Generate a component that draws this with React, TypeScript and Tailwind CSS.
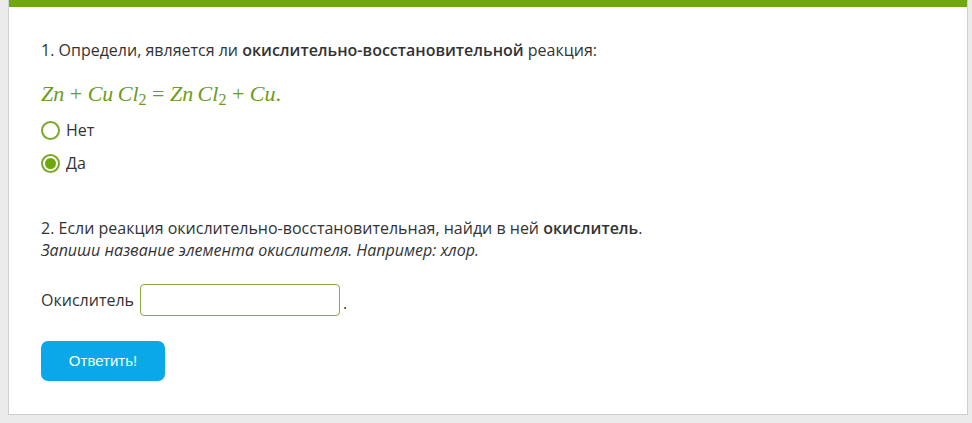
import { useState } from "react"

export default function App() {
  const [answer, setAnswer] = useState<"no" | "yes">("yes")
  const [value, setValue] = useState("")

  return (
    <div className="min-h-[423px] bg-[#ebebeb] pl-2 pr-[4px] pb-[8px] font-['Open_Sans',sans-serif] text-[16px] text-[#333]">
      <div className="w-[960px] border-x border-b border-[#cfcfcf] bg-white">
        <div className="h-[7px] bg-[#6fa80b]" />
        <div className="px-8 pt-[32px] pb-[33px]">
          <p className="leading-[22px]">
            1. Определи, является ли <b className="font-semibold">окислительно-восстановительной</b> реакция:
          </p>
          <p className="mt-[16px] h-[34px] font-['Liberation_Serif',serif] text-[22px] italic leading-[34px] text-[#6b9b22]">
            Zn <span className="not-italic">+</span> Cu&thinsp;Cl<sub className="not-italic text-[16px]">2</sub>{" "}
            <span className="not-italic">=</span> Zn&thinsp;Cl<sub className="not-italic text-[16px]">2</sub>{" "}
            <span className="not-italic">+</span> Cu<span className="not-italic">.</span>
          </p>
          <div className="mt-[8px] flex flex-col gap-[11px]">
            <label className="flex h-[22px] cursor-pointer items-center gap-[6px]" onClick={() => setAnswer("no")}>
              <span className="flex h-[19px] w-[19px] items-center justify-center rounded-full border-2 border-[#7aa827] bg-white">
                {answer === "no" && <span className="h-[11px] w-[11px] rounded-full bg-[#6fa80b]" />}
              </span>
              <span>Нет</span>
            </label>
            <label className="flex h-[22px] cursor-pointer items-center gap-[6px]" onClick={() => setAnswer("yes")}>
              <span className="flex h-[19px] w-[19px] items-center justify-center rounded-full border-2 border-[#7aa827] bg-white">
                {answer === "yes" && <span className="h-[11px] w-[11px] rounded-full bg-[#6fa80b]" />}
              </span>
              <span>Да</span>
            </label>
          </div>
          <p className="mt-[43px] leading-[22px]">
            2. Если реакция окислительно-восстановительная, найди в ней <b className="font-semibold">окислитель</b>.
          </p>
          <p className="italic leading-[22px]">Запиши название элемента окислителя. Например: хлор.</p>
          <div className="mt-[23px] flex items-center">
            <span>Окислитель</span>
            <input
              value={value}
              onChange={(e) => setValue(e.target.value)}
              className="ml-[6px] h-[32px] w-[200px] rounded-[4px] border border-[#86ac3e] px-2 outline-none"
            />
            <span className="ml-[3px] mt-[6px]">.</span>
          </div>
          <button className="mt-[25px] h-[40px] w-[124px] rounded-[7px] bg-[#0aa8e8] font-['Liberation_Sans',sans-serif] text-[15px] text-white">
            Ответить!
          </button>
        </div>
      </div>
    </div>
  )
}
